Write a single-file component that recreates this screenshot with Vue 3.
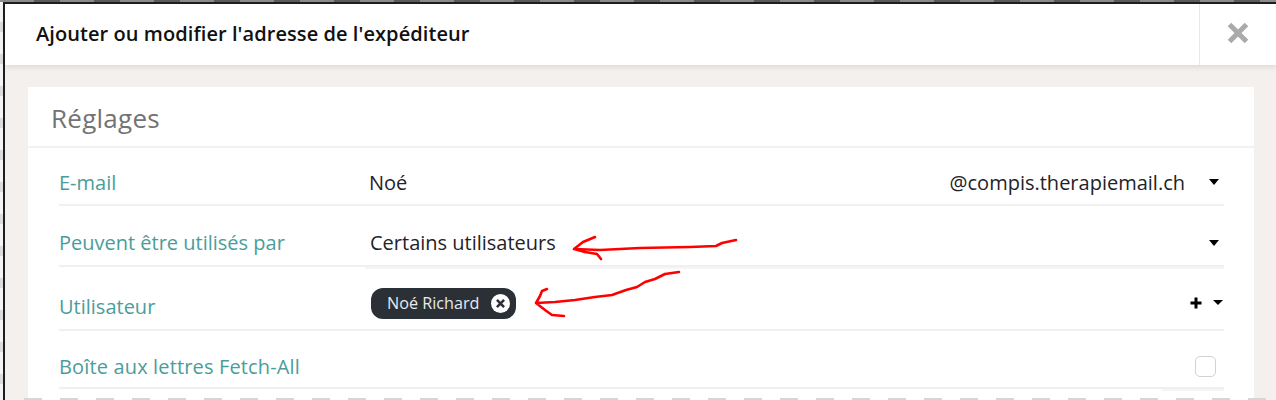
<script setup>
const title = "Ajouter ou modifier l'adresse de l'expéditeur";
</script>

<template>
  <div class="stage">
    <div class="modal">
      <header class="head">
        <h1 class="title">{{ title }}</h1>
        <button class="close" aria-label="Fermer">
          <svg width="22" height="22" viewBox="0 0 22 22"><path d="M2.5 2.5 19.5 19.5M19.5 2.5 2.5 19.5" stroke="#aaa" stroke-width="5" fill="none"/></svg>
        </button>
      </header>
      <main class="body">
        <section class="card">
          <h2 class="card-title">Réglages</h2>
          <div class="rows">
            <div class="row r1">
              <span class="label">E-mail</span>
              <div class="field">
                <span class="value">Noé</span>
                <span class="domain">@compis.therapiemail.ch</span>
                <i class="caret"></i>
              </div>
            </div>
            <div class="row r2">
              <span class="label">Peuvent être utilisés par</span>
              <div class="field">
                <span class="value v2">Certains utilisateurs</span>
                <i class="caret"></i>
              </div>
            </div>
            <div class="row r3">
              <span class="label low">Utilisateur</span>
              <div class="field tight">
                <span class="tag">Noé Richard
                  <svg class="tag-x" width="19" height="19" viewBox="0 0 18 18"><circle cx="9" cy="9" r="9" fill="#fff"/><path d="M5.6 5.6 12.4 12.4M12.4 5.6 5.6 12.4" stroke="#2b3036" stroke-width="2.4"/></svg>
                </span>
                <svg class="plus" width="12" height="12" viewBox="0 0 12 12"><path d="M6 .5v11M.5 6h11" stroke="#000" stroke-width="3"/></svg>
                <i class="caret small"></i>
              </div>
            </div>
            <div class="row r4">
              <span class="label">Boîte aux lettres Fetch-All</span>
              <div class="field"><span class="check"></span></div>
            </div>
            <div class="tail"></div>
          </div>
        </section>
      </main>
    </div>
    <div class="dashes"></div>
    <svg class="ink" width="1276" height="400" viewBox="0 0 1276 400" fill="none" stroke="#f00" stroke-width="2.6" stroke-linecap="round" stroke-linejoin="round">
      <path d="M736 240 722 243 716 246 690 247 640 248 600 250 574 249 583 242 595 237M574 249 585 252 597 254 601 259"/>
      <path d="M679 272 665 274 655 279 645 282 637 287 626 290 612 295 595 297 575 300 555 302 536 303 540 296 542 291 547 289M536 303 545 310 552 315 564 316"/>
    </svg>
  </div>
</template>

<style>
html, body { margin: 0; padding: 0; background: #fff; }
</style>

<style scoped>
.stage {
  position: relative;
  width: 1276px;
  height: 400px;
  box-sizing: border-box;
  padding: 2px 0 0 3px;
  overflow: hidden;
  font-family: "Open Sans", "Noto Sans", sans-serif;
  background:
    repeating-linear-gradient(90deg, #8b8d8d 0 34px, #5a5c5c 34px 60px) top / 100% 2px no-repeat,
    repeating-linear-gradient(180deg, #f4f4f4 0 22px, #dcdcdc 22px 32px) left / 3px 100% no-repeat,
    #fff;
}
.modal {
  height: 398px;
  box-sizing: border-box;
  border-top: 2px solid #1e2020;
  border-left: 2px solid #1d1f1f;
  display: flex;
  flex-direction: column;
  background: #f3f0ed;
}
.head {
  height: 61px;
  flex: none;
  display: flex;
  align-items: center;
  justify-content: space-between;
  background: #fff;
  box-shadow: 0 2px 6px rgba(0, 0, 0, .1);
  position: relative;
}
.title {
  margin: 0 0 3px 31px;
  font-size: 20px;
  font-weight: 600;
  letter-spacing: .07px;
  color: #111;
}
.close {
  width: 77px;
  height: 61px;
  box-sizing: border-box;
  padding: 0 0 4px;
  border: 0;
  border-left: 1px solid #e8e8e8;
  background: #fff;
  display: flex;
  align-items: center;
  justify-content: center;
}
.body {
  flex: 1;
  padding: 22px 22px 0 23px;
  min-height: 0;
}
.card {
  background: #fff;
  height: 330px;
  display: flex;
  flex-direction: column;
}
.card-title {
  margin: 0;
  height: 61px;
  box-sizing: border-box;
  padding: 13px 0 0 23px;
  font-size: 26px;
  line-height: 36px;
  font-weight: 400;
  letter-spacing: .25px;
  color: #737373;
  border-bottom: 2px solid #f2f2f2;
}
.rows {
  padding: 0 30px 0 31px;
}
.row {
  display: flex;
  align-items: center;
  box-sizing: border-box;
  font-size: 20px;
  border-bottom: 2px solid #f0f0f0;
}
.r1 { height: 58px; padding-top: 12px; }
.r2 { height: 61px; padding-top: 14px; }
.r3 {
  height: 64px;
  padding-top: 10px;
  background: linear-gradient(#f5f5f5, #f5f5f5) 306px 0 / 100% 2px no-repeat;
}
.r4 { height: 58px; padding-top: 14px; }
.r4 .label { letter-spacing: .15px; }
.tail {
  width: 62px;
  height: 2px;
  margin-left: auto;
  background: #f4f4f4;
}
.label {
  width: 306px;
  flex: none;
  color: #4a9d9a;
}
.low { padding-top: 6px; }
.field {
  flex: 1;
  display: flex;
  align-items: center;
  color: #1f2328;
  padding-right: 5px;
}
.field.tight { padding-right: 0; }
.value { flex: 1; padding-left: 4px; }
.v2 { padding-left: 5px; }
.domain { margin-right: 24px; }
.caret {
  width: 0;
  height: 0;
  border-left: 5.5px solid transparent;
  border-right: 5.5px solid transparent;
  border-top: 6px solid #000;
}
.caret.small { margin-left: 11px; border-left-width: 5px; border-right-width: 5px; border-top-width: 5px; margin-bottom: 2px; margin-right: 1px; }
.tag {
  margin: 0 auto 0 6px;
  height: 31px;
  box-sizing: border-box;
  padding: 0 6px 0 16px;
  display: inline-flex;
  align-items: center;
  gap: 11px;
  border-radius: 12px;
  background: #2b3036;
  color: #e8eaec;
  font-size: 16.2px;
}
.tag-x { flex: none; }
.plus { flex: none; }
.check {
  margin-left: auto;
  margin-right: 3px;
  width: 21px;
  height: 21px;
  box-sizing: border-box;
  border: 1.5px solid #d2d2d2;
  border-radius: 5px;
}
.dashes {
  position: absolute;
  left: 24px;
  right: 0;
  bottom: 0;
  height: 2px;
  background: repeating-linear-gradient(90deg, #d6d6d6 0 18px, transparent 18px 36px);
}
.ink {
  position: absolute;
  left: 0;
  top: 0;
  pointer-events: none;
}
</style>
